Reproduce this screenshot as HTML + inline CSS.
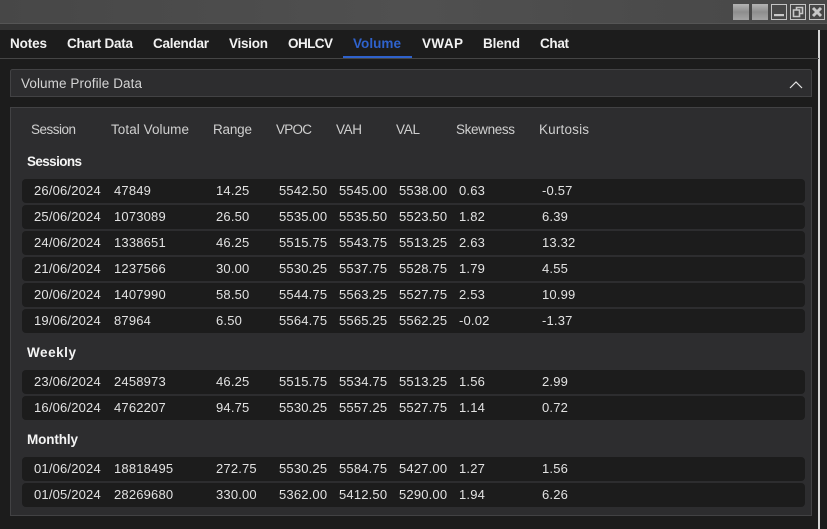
<!DOCTYPE html>
<html lang="en"><head><meta charset="utf-8"><title>Volume</title>
<style>
html,body{margin:0;padding:0;background:#1c1c1c;width:827px;height:529px;overflow:hidden}
svg{display:block}
text{font-family:"Liberation Sans",Arial,sans-serif;white-space:pre}
.t{font-size:13.5px;font-weight:bold;fill:#f2f2f2}
.h{font-size:13.5px;fill:#cfcfcf}
.s{font-size:13.5px;font-weight:bold;fill:#f4f4f4}
.d text{font-size:13px;fill:#e2e2e2;letter-spacing:.18px}
.r{fill:#1c1c1c}
</style></head><body>
<svg width="827" height="529" viewBox="0 0 827 529" xmlns="http://www.w3.org/2000/svg">
<defs>
<linearGradient id="tb" x1="0" x2="1" y1="0" y2="0"><stop offset="0" stop-color="#474747"/><stop offset=".5" stop-color="#505050"/><stop offset="1" stop-color="#474747"/></linearGradient>
<linearGradient id="bt" x1="0" x2="0" y1="0" y2="1"><stop offset="0" stop-color="#b4b4b4"/><stop offset=".5" stop-color="#8e8e8e"/><stop offset="1" stop-color="#a4a4a4"/></linearGradient>
</defs>
<rect width="827" height="529" fill="#1c1c1c"/>
<rect width="827" height="23" fill="url(#tb)"/>
<rect y="23" width="827" height="1" fill="#555"/>
<rect y="24" width="827" height="6" fill="#333"/>
<!-- window buttons -->
<rect x="733" y="4" width="16" height="16" fill="url(#bt)"/>
<rect x="752" y="4" width="16" height="16" fill="url(#bt)"/>
<g fill="none" stroke="#c4c4c4" stroke-width="1">
<rect x="771.5" y="4.5" width="15" height="15"/>
<rect x="790.5" y="4.5" width="15" height="15"/>
<rect x="809.5" y="4.5" width="15" height="15"/>
</g>
<rect x="774" y="14" width="10" height="2.2" fill="#c8c8c8"/>
<path d="M793.5 10h6v6.500h-6zM796.500 10V7.500h6v6h-3" fill="none" stroke="#c8c8c8" stroke-width="1.6"/>
<path d="M813 8l8 8M821 8l-8 8" stroke="#c8c8c8" stroke-width="3" fill="none"/>
<!-- scrollbar -->
<rect x="818" y="30" width="2" height="499" fill="#d6d6d6"/>
<!-- tabs -->
<rect y="58" width="819" height="1" fill="#454545"/>
<text class="t" x="10" y="48" textLength="37">Notes</text>
<text class="t" x="67" y="48" textLength="66">Chart Data</text>
<text class="t" x="153" y="48" textLength="56">Calendar</text>
<text class="t" x="229" y="48" textLength="39">Vision</text>
<text class="t" x="288" y="48" textLength="45">OHLCV</text>
<text class="t" x="353" y="48" textLength="48" style="fill:#2f62cc">Volume</text>
<text class="t" x="422" y="48" textLength="41">VWAP</text>
<text class="t" x="483" y="48" textLength="37">Blend</text>
<text class="t" x="540" y="48" textLength="29">Chat</text>
<rect x="343" y="56" width="69" height="2" fill="#2f62cc"/>
<!-- header panel -->
<path d="M10.500 96.500V71.500a2 2 0 0 1 2-2H809.500a2 2 0 0 1 2 2V96.500z" fill="#2d2d2f" stroke="#424244"/>
<text x="21" y="88" style="font-size:13.500px;fill:#d4d4d4" textLength="121">Volume Profile Data</text>
<path d="M790 88l6-6 6 6" fill="none" stroke="#e4e4e4" stroke-width="1.200"/>
<!-- main panel -->
<rect x="10.500" y="107.500" width="801" height="408" fill="#2d2d2f" stroke="#424244"/>
<text class="h" x="31" y="134" textLength="45">Session</text>
<text class="h" x="111" y="134" textLength="78">Total Volume</text>
<text class="h" x="213" y="134" textLength="39">Range</text>
<text class="h" x="276" y="134" textLength="36">VPOC</text>
<text class="h" x="336" y="134" textLength="26">VAH</text>
<text class="h" x="396" y="134" textLength="24">VAL</text>
<text class="h" x="456" y="134" textLength="59">Skewness</text>
<text class="h" x="539" y="134" textLength="50">Kurtosis</text>
<text class="s" x="27" y="166" textLength="55">Sessions</text>
<text class="s" x="27" y="357" textLength="49">Weekly</text>
<text class="s" x="27" y="444" textLength="51">Monthly</text>
<!-- rows -->
<g class="r">
<rect x="22" y="179" width="783" height="24" rx="4"/>
<rect x="22" y="205" width="783" height="24" rx="4"/>
<rect x="22" y="231" width="783" height="24" rx="4"/>
<rect x="22" y="257" width="783" height="24" rx="4"/>
<rect x="22" y="283" width="783" height="24" rx="4"/>
<rect x="22" y="309" width="783" height="24" rx="4"/>
<rect x="22" y="370" width="783" height="24" rx="4"/>
<rect x="22" y="396" width="783" height="24" rx="4"/>
<rect x="22" y="457" width="783" height="24" rx="4"/>
<rect x="22" y="483" width="783" height="24" rx="4"/>
</g>
<g class="d">
<g transform="translate(0,195)"><text x="34">26/06/2024</text><text x="114">47849</text><text x="216">14.25</text><text x="279">5542.50</text><text x="339">5545.00</text><text x="399">5538.00</text><text x="459">0.63</text><text x="542">-0.57</text></g>
<g transform="translate(0,221)"><text x="34">25/06/2024</text><text x="114">1073089</text><text x="216">26.50</text><text x="279">5535.00</text><text x="339">5535.50</text><text x="399">5523.50</text><text x="459">1.82</text><text x="542">6.39</text></g>
<g transform="translate(0,247)"><text x="34">24/06/2024</text><text x="114">1338651</text><text x="216">46.25</text><text x="279">5515.75</text><text x="339">5543.75</text><text x="399">5513.25</text><text x="459">2.63</text><text x="542">13.32</text></g>
<g transform="translate(0,273)"><text x="34">21/06/2024</text><text x="114">1237566</text><text x="216">30.00</text><text x="279">5530.25</text><text x="339">5537.75</text><text x="399">5528.75</text><text x="459">1.79</text><text x="542">4.55</text></g>
<g transform="translate(0,299)"><text x="34">20/06/2024</text><text x="114">1407990</text><text x="216">58.50</text><text x="279">5544.75</text><text x="339">5563.25</text><text x="399">5527.75</text><text x="459">2.53</text><text x="542">10.99</text></g>
<g transform="translate(0,325)"><text x="34">19/06/2024</text><text x="114">87964</text><text x="216">6.50</text><text x="279">5564.75</text><text x="339">5565.25</text><text x="399">5562.25</text><text x="459">-0.02</text><text x="542">-1.37</text></g>
<g transform="translate(0,386)"><text x="34">23/06/2024</text><text x="114">2458973</text><text x="216">46.25</text><text x="279">5515.75</text><text x="339">5534.75</text><text x="399">5513.25</text><text x="459">1.56</text><text x="542">2.99</text></g>
<g transform="translate(0,412)"><text x="34">16/06/2024</text><text x="114">4762207</text><text x="216">94.75</text><text x="279">5530.25</text><text x="339">5557.25</text><text x="399">5527.75</text><text x="459">1.14</text><text x="542">0.72</text></g>
<g transform="translate(0,473)"><text x="34">01/06/2024</text><text x="114">18818495</text><text x="216">272.75</text><text x="279">5530.25</text><text x="339">5584.75</text><text x="399">5427.00</text><text x="459">1.27</text><text x="542">1.56</text></g>
<g transform="translate(0,499)"><text x="34">01/05/2024</text><text x="114">28269680</text><text x="216">330.00</text><text x="279">5362.00</text><text x="339">5412.50</text><text x="399">5290.00</text><text x="459">1.94</text><text x="542">6.26</text></g>
</g>
</svg>
</body></html>
